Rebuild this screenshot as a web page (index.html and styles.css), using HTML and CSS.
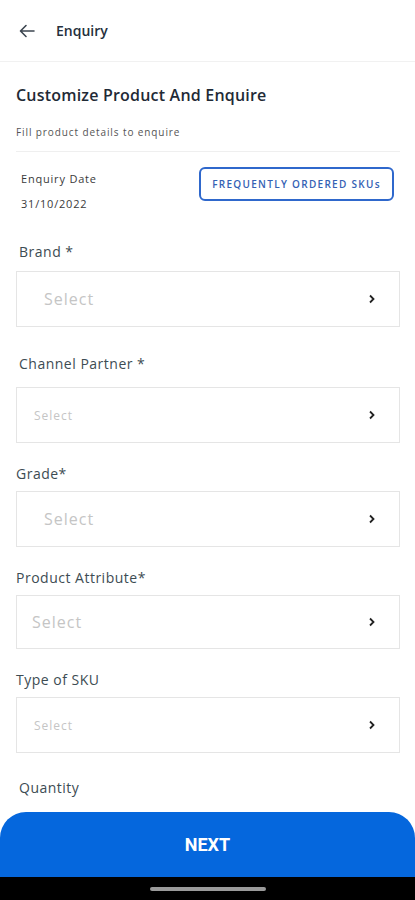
FILE: index.html
```html
<!DOCTYPE html>
<html lang="en">
<head>
  <meta charset="UTF-8">
  <title>Enquiry</title>
  <link rel="stylesheet" href="styles.css">
</head>
<body>

<div class="topbar">
  <svg class="back" width="16" height="14" viewBox="0 0 16 14"><path d="M15 7H2M7 1.5L1.5 7L7 12.5" fill="none" stroke="#3c4650" stroke-width="1.6" stroke-linecap="round" stroke-linejoin="round"/></svg>
  <span class="topbar-title">Enquiry</span>
</div>

<div class="content">
  <h1 class="title">Customize Product And Enquire</h1>
  <p class="subtitle">Fill product details to enquire</p>

  <div class="date-row">
    <div class="date-info">
      <div class="date-label">Enquiry Date</div>
      <div class="date-value">31/10/2022</div>
    </div>
    <button class="sku-btn">FREQUENTLY ORDERED SKUs</button>
  </div>

  <div class="field first">
    <div class="label indent">Brand *</div>
    <div class="select-box big"><span>Select</span><svg class="chev" width="8" height="10" viewBox="0 0 8 10"><path d="M2 1.5L5.5 5L2 8.5" fill="none" stroke="#222" stroke-width="1.8"/></svg></div>
  </div>

  <div class="field second">
    <div class="label indent">Channel Partner *</div>
    <div class="select-box small"><span>Select</span><svg class="chev" width="8" height="10" viewBox="0 0 8 10"><path d="M2 1.5L5.5 5L2 8.5" fill="none" stroke="#222" stroke-width="1.8"/></svg></div>
  </div>

  <div class="field">
    <div class="label">Grade*</div>
    <div class="select-box big"><span>Select</span><svg class="chev" width="8" height="10" viewBox="0 0 8 10"><path d="M2 1.5L5.5 5L2 8.5" fill="none" stroke="#222" stroke-width="1.8"/></svg></div>
  </div>

  <div class="field">
    <div class="label">Product Attribute*</div>
    <div class="select-box big near short"><span>Select</span><svg class="chev" width="8" height="10" viewBox="0 0 8 10"><path d="M2 1.5L5.5 5L2 8.5" fill="none" stroke="#222" stroke-width="1.8"/></svg></div>
  </div>

  <div class="field">
    <div class="label">Type of SKU</div>
    <div class="select-box small"><span>Select</span><svg class="chev" width="8" height="10" viewBox="0 0 8 10"><path d="M2 1.5L5.5 5L2 8.5" fill="none" stroke="#222" stroke-width="1.8"/></svg></div>
  </div>

  <div class="field last">
    <div class="label indent">Quantity</div>
  </div>
</div>

<div class="bottom">
  <button class="next-btn">NEXT</button>
  <div class="navbar"><span class="home-pill"></span></div>
</div>

</body>
</html>
```

FILE: styles.css
```css
body {
  margin: 0;
  font-family: "Open Sans", "Noto Sans", sans-serif;
  background: #fff;
  color: #1e2a36;
  width: 415px;
  height: 900px;
  overflow: hidden;
}
.topbar {
  height: 61px;
  display: flex;
  align-items: center;
  padding-left: 19px;
  border-bottom: 1px solid #f1f1f1;
}
.back {
  margin-right: 21px;
}
.topbar-title {
  font-size: 14px;
  font-weight: 600;
  color: #25303c;
}
.content {
  padding: 0 15px 0 16px;
}
.title {
  margin: 23px 0 0;
  font-size: 16px;
  line-height: 20px;
  font-weight: 600;
  letter-spacing: 0.2px;
  color: #1f2a36;
}
.subtitle {
  margin: 20px 0 0;
  font-size: 10px;
  line-height: 14px;
  letter-spacing: 0.9px;
  color: #555;
  padding-bottom: 12px;
  border-bottom: 1px solid #efefef;
}
.date-row {
  display: flex;
  justify-content: space-between;
  align-items: flex-start;
  margin-top: 15px;
  padding: 0 6px 0 5px;
}
.date-info {
  padding-top: 5px;
  font-size: 11px;
  line-height: 14px;
  letter-spacing: 0.8px;
  color: #3a3a3a;
}
.date-value {
  margin-top: 11px;
}
.sku-btn {
  width: 195px;
  height: 34px;
  border: 2px solid #2f68cc;
  border-radius: 6px;
  background: #fff;
  color: #3461b4;
  font-family: "Open Sans", sans-serif;
  font-size: 10px;
  font-weight: 600;
  letter-spacing: 1.3px;
  padding: 0;
}
.field {
  margin-top: 22px;
}
.field.first {
  margin-top: 32px;
}
.field.second {
  margin-top: 28px;
}
.field.last {
  margin-top: 26px;
}
.label {
  font-size: 14px;
  line-height: 18px;
  letter-spacing: 0.5px;
  color: #3d4c53;
  margin-bottom: 8px;
}
.label.indent {
  padding-left: 3px;
}
.first .label {
  margin-bottom: 10px;
}
.second .label {
  margin-bottom: 14px;
}
.select-box {
  height: 54px;
  border: 1px solid #e5e5e5;
  display: flex;
  align-items: center;
  justify-content: space-between;
  padding: 0 23px 0 17px;
}
.select-box span {
  color: #c5c5c5;
  letter-spacing: 1px;
}
.select-box.big {
  padding-left: 27px;
}
.select-box.big span {
  font-size: 16px;
}
.select-box.small span {
  font-size: 12px;
}
.select-box.near {
  padding-left: 15px;
}
.select-box.short {
  height: 52px;
}
.bottom {
  position: fixed;
  left: 0;
  right: 0;
  bottom: 0;
}
.next-btn {
  display: block;
  width: 100%;
  height: 65px;
  border: none;
  border-radius: 26px 26px 0 0;
  background: #0567dd;
  color: #fff;
  font-family: Roboto, sans-serif;
  font-size: 18px;
  font-weight: 700;
}
.navbar {
  height: 23px;
  background: #000;
  display: flex;
  justify-content: center;
  align-items: center;
}
.home-pill {
  width: 116px;
  height: 4px;
  border-radius: 2px;
  background: #9a9a9a;
}
```
